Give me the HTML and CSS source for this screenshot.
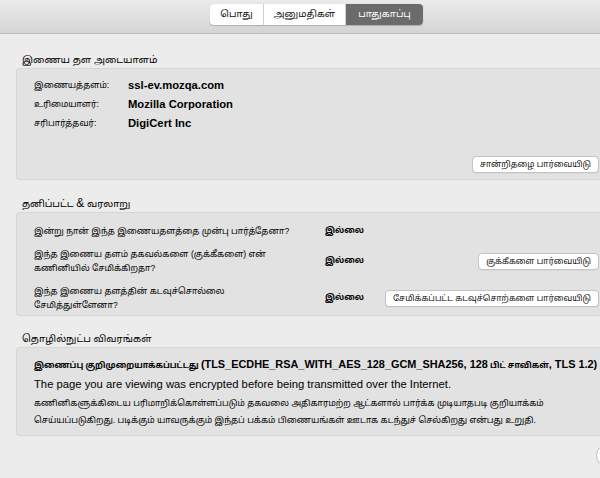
FILE: index.html
```html
<!DOCTYPE html>
<html lang="ta">
<head>
<meta charset="utf-8">
<link rel="stylesheet" href="styles.css">
</head>
<body>
<div class="toolbar">
  <div class="segmented">
    <span class="seg">பொது</span>
    <span class="seg">அனுமதிகள்</span>
    <span class="seg active">பாதுகாப்பு</span>
  </div>
</div>
<main class="content">
  <section class="section first">
    <h2 class="heading">இணைய தள அடையாளம்</h2>
    <div class="box box-identity">
      <div class="idgrid">
        <span class="label">இணையத்தளம்:</span><span class="value en">ssl-ev.mozqa.com</span>
        <span class="label">உரிமையாளர்:</span><span class="value en">Mozilla Corporation</span>
        <span class="label">சரிபார்த்தவர்:</span><span class="value en">DigiCert Inc</span>
      </div>
      <div class="btnrow"><button class="btn">சான்றிதழை பார்வையிடு</button></div>
    </div>
  </section>
  <section class="section">
    <h2 class="heading">தனிப்பட்ட <span class="amp">&amp;</span> வரலாறு</h2>
    <div class="box box-privacy">
      <div class="prow">
        <span class="q">இன்று நான் இந்த இணையதளத்தை முன்பு பார்த்தேனா?</span>
        <span class="a">இல்லை</span>
        <span></span>
      </div>
      <div class="prow">
        <span class="q">இந்த இணைய தளம் தகவல்களை (குக்கீகளை) என்<br>கணினியில் சேமிக்கிறதா?</span>
        <span class="a">இல்லை</span>
        <button class="btn">குக்கீகளை பார்வையிடு</button>
      </div>
      <div class="prow">
        <span class="q">இந்த இணைய தளத்தின் கடவுச்சொல்லை<br>சேமித்துள்ளேனா?</span>
        <span class="a">இல்லை</span>
        <button class="btn">சேமிக்கப்பட்ட கடவுச்சொற்களை பார்வையிடு</button>
      </div>
    </div>
  </section>
  <section class="section">
    <h2 class="heading">தொழில்நுட்ப விவரங்கள்</h2>
    <div class="box box-tech">
      <p class="tline bold">இணைப்பு குறிமுறையாக்கப்பட்டது <span class="en">(TLS_ECDHE_RSA_WITH_AES_128_GCM_SHA256, 128</span> பிட் சாவிகள்<span class="en">, TLS 1.2)</span></p>
      <p class="tline en">The page you are viewing was encrypted before being transmitted over the Internet.</p>
      <p class="tpara">கணினிகளுக்கிடைய பரிமாறிக்கொள்ளப்படும் தகவலை அதிகாரமற்ற ஆட்களால் பார்க்க முடியாதபடி குறியாக்கம்<br>செய்யப்படுகிறது. படிக்கும் யாவருக்கும் இந்தப் பக்கம் பிணையங்கள் ஊடாக கடந்துச் செல்கிறது என்பது உறுதி.</p>
    </div>
  </section>
  <div class="footer"><span class="help"></span></div>
</main>
</body>
</html>
```
FILE: styles.css
```css
html, body {
  margin: 0;
  padding: 0;
  overflow: hidden;
  height: 100%;
}
body {
  background: #ececec;
  font-family: "Liberation Sans", "Noto Sans Tamil", "Lohit Tamil", "Noto Sans", sans-serif;
  font-size: 8.6px;
  color: #000;
}
.en {
  font-size: 11.25px;
}
.toolbar {
  height: 34px;
  box-sizing: border-box;
  border-bottom: 1px solid #bdbdbd;
  background: linear-gradient(#ebebeb, #d4d4d4);
  display: flex;
  align-items: flex-start;
  padding: 4px 0 0 210px;
}
.segmented {
  display: flex;
  height: 21px;
  border-radius: 4px;
  overflow: hidden;
  background: #fff;
  box-shadow: 0 0.5px 1px rgba(0,0,0,0.2);
}
.seg {
  display: flex;
  align-items: center;
  justify-content: center;
  font-size: 9.6px;
  color: #111;
  border-right: 1px solid #d0d0d0;
  white-space: nowrap;
}
.seg:nth-child(1) { width: 53px; }
.seg:nth-child(2) { width: 81px; }
.seg.active {
  width: 77px;
  background: #6b6b6b;
  color: #fff;
  border-right: none;
}
.content {
  padding: 0 0 0 16px;
}
.section { margin-top: 15px; }
.section.first { margin-top: 18px; }
.heading {
  margin: 0;
  padding-left: 6px;
  font-size: 9.8px;
  font-weight: normal;
  line-height: 16px;
}
.amp { font-size: 12px; }
.box {
  margin-right: -10px;
  background: #e2e2e2;
  border: 1px solid #d6d6d6;
  border-right: none;
  border-radius: 4px 0 0 4px;
  padding: 0 11px 0 17px;
}
.box-identity {
  box-sizing: border-box;
  height: 112px;
  padding-top: 7px;
  display: flex;
  flex-direction: column;
}
.idgrid {
  display: grid;
  grid-template-columns: 94px 1fr;
  line-height: 19px;
}
.value { font-weight: bold; }
.btnrow {
  margin-top: auto;
  margin-bottom: 6px;
  display: flex;
  justify-content: flex-end;
}
.btn {
  font-family: inherit;
  font-size: 8.4px;
  height: 17px;
  padding: 0 7px;
  background: #fff;
  border: 1px solid #c4c4c4;
  border-radius: 4px;
  color: #111;
  line-height: 15px;
  white-space: nowrap;
  box-shadow: 0 0.5px 0.5px rgba(0,0,0,0.08);
}
.box-privacy {
  padding-top: 11px;
  padding-bottom: 3px;
  display: flex;
  flex-direction: column;
  gap: 9px;
}
.prow {
  display: grid;
  grid-template-columns: 291px 57px 1fr;
  align-items: center;
  line-height: 14px;
}
.prow .a { font-weight: bold; font-size: 8.2px; }
.prow .btn { justify-self: end; }
.box-tech {
  padding-top: 7px;
  padding-bottom: 6px;
}
.tline {
  margin: 0;
  line-height: 19px;
  white-space: nowrap;
}
.tline.bold { font-weight: bold; font-size: 8.2px; }
.tline.bold .en { font-size: 10.9px; }
.tpara {
  margin: 1px 0 0;
  line-height: 17px;
  white-space: nowrap;
}
.footer {
  display: flex;
  justify-content: flex-end;
  margin-right: -19px;
  margin-top: 8px;
}
.help {
  width: 21px;
  height: 21px;
  border-radius: 50%;
  background: #fff;
  border: 1px solid #bcbcbc;
}
```
